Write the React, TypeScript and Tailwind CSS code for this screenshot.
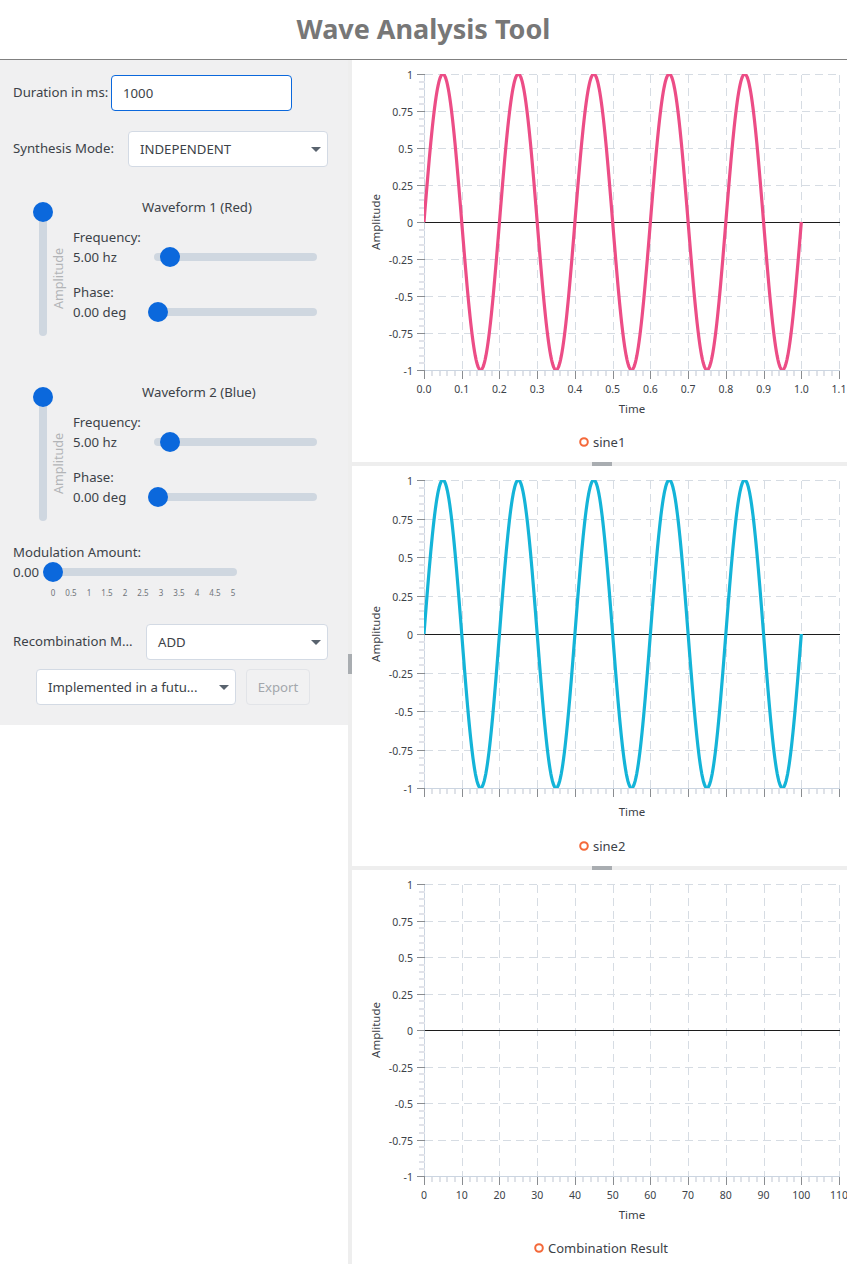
import React from "react";

const FONT = "font-['Noto_Sans','Open_Sans',sans-serif]";

const PLOT_LEFT = 72;
const X_STEP = 37.73;

type ChartProps = {
  height: number;
  top: number;
  bottom: number;
  xLabels: string[];
  color?: string;
  legend: string;
  legendX: number;
  legendY: number;
  timeY: number;
  tickY?: number;
};

const Chart: React.FC<ChartProps> = ({
  height,
  top,
  bottom,
  xLabels,
  color,
  legend,
  legendX,
  legendY,
  timeY,
  tickY,
}) => {
  const clipId = `clip-${legend.replace(" ", "")}`;
  const plotRight = PLOT_LEFT + X_STEP * 11;
  const yFor = (v: number) => top + ((1 - v) / 2) * (bottom - top);
  const yMajors = [1, 0.75, 0.5, 0.25, 0, -0.25, -0.5, -0.75, -1];
  const xMajors = Array.from({ length: 12 }, (_, i) => PLOT_LEFT + i * X_STEP);

  const points: string[] = [];
  if (color) {
    for (let t = 0; t <= 1.0001; t += 0.002) {
      const x = PLOT_LEFT + t * X_STEP * 10;
      points.push(`${x.toFixed(2)},${yFor(Math.sin(2 * Math.PI * 5 * t)).toFixed(2)}`);
    }
  }

  return (
    <svg width={495} height={height} className="block shrink-0 text-[#3c4248]">
      <defs>
        <clipPath id={clipId}>
          <rect x={PLOT_LEFT} y={top} width={plotRight - PLOT_LEFT} height={bottom - top} />
        </clipPath>
      </defs>

      <g transform="translate(0.5 0.5)" shapeRendering="crispEdges">
        {/* grid */}
        {yMajors.slice(0, -1).map((v) =>
          v === 0 ? null : (
            <line key={v} x1={PLOT_LEFT} x2={plotRight} y1={yFor(v)} y2={yFor(v)} stroke="#d6dce3" strokeDasharray="8 5" />
          ),
        )}
        {xMajors.slice(1).map((x) => (
          <line key={x} x1={x} x2={x} y1={top} y2={bottom} stroke="#d6dce3" strokeDasharray="8 5" />
        ))}

        {/* y axis */}
        <line x1={PLOT_LEFT} x2={PLOT_LEFT} y1={top} y2={bottom} stroke="#cbd5e1" />
        {yMajors.slice(0, -1).map((v) =>
          [1, 2, 3, 4].map((i) => {
            const y = yFor(v) + (i * (bottom - top)) / 40;
            return <line key={`${v}-${i}`} x1={PLOT_LEFT - 6} x2={PLOT_LEFT} y1={y} y2={y} stroke="#e1e3ea" strokeWidth={2} />;
          }),
        )}
        {yMajors.map((v) => (
          <line key={v} x1={PLOT_LEFT - 8} x2={PLOT_LEFT} y1={yFor(v)} y2={yFor(v)} stroke="#8a8d91" />
        ))}

        {/* x axis */}
        <line x1={PLOT_LEFT} x2={plotRight} y1={bottom} y2={bottom} stroke="#cbd5e1" />
        {xMajors.slice(0, -1).map((x) =>
          [1, 2, 3, 4].map((i) => {
            const mx = x + (i * X_STEP) / 5;
            return <line key={`${x}-${i}`} x1={mx} x2={mx} y1={bottom} y2={bottom + 5} stroke="#dfe2e8" strokeWidth={2} />;
          }),
        )}
        {xMajors.map((x) => (
          <line key={x} x1={x} x2={x} y1={bottom} y2={bottom + 8} stroke="#8a8d91" />
        ))}

        {/* zero line */}
        <line x1={PLOT_LEFT} x2={plotRight} y1={yFor(0)} y2={yFor(0)} stroke="#1c1c1c" />
      </g>

      {color && (
        <polyline
          points={points.join(" ")}
          fill="none"
          stroke={color}
          strokeWidth={3.2}
          strokeLinejoin="round"
          clipPath={`url(#${clipId})`}
        />
      )}

      {/* labels */}
      {yMajors.map((v) => (
        <text key={v} x={PLOT_LEFT - 11} y={yFor(v) + 5} textAnchor="end" fontSize={10.5} fill="currentColor">
          {v}
        </text>
      ))}
      {tickY !== undefined &&
        xMajors.map((x, i) => (
          <text key={x} x={x} y={tickY + 4} textAnchor="middle" fontSize={10.5} fill="currentColor">
            {xLabels[i]}
          </text>
        ))}
      <text
        x={25}
        y={(top + bottom) / 2}
        textAnchor="middle"
        fontSize={11.5}
        fill="currentColor"
        dominantBaseline="middle"
        transform={`rotate(-90 25 ${(top + bottom) / 2})`}
      >
        Amplitude
      </text>
      <text x={280} y={timeY + 5} textAnchor="middle" fontSize={11.5} fill="currentColor">
        Time
      </text>
      <circle cx={legendX} cy={legendY} r={3.8} fill="#fff" stroke="#f4693a" strokeWidth={2} />
      <text x={legendX + 9} y={legendY + 4.5} fontSize={13} fill="currentColor">
        {legend}
      </text>
    </svg>
  );
};

const Slider: React.FC<{ width: number; thumb: number }> = ({ width, thumb }) => (
  <div className="relative h-2 rounded-full bg-[#cfd7e0]" style={{ width }}>
    <div
      className="absolute top-1/2 h-5 w-5 -translate-x-1/2 -translate-y-1/2 rounded-full bg-[#0b68dc]"
      style={{ left: thumb }}
    />
  </div>
);

const Caret = () => (
  <svg width="10" height="5" viewBox="0 0 10 5" className="shrink-0">
    <path d="M0 0h10L5 5z" fill="#59636e" />
  </svg>
);

const Select: React.FC<{ label: string; className: string }> = ({ label, className }) => (
  <div
    className={`flex h-9 items-center justify-between rounded border border-[#d3dae4] bg-white pl-[11px] pr-[6px] pt-px text-[13.2px] ${className}`}
  >
    <span>{label}</span>
    <Caret />
  </div>
);

const Waveform: React.FC<{ title: string }> = ({ title }) => (
  <div className="ml-[26px] flex h-[145px] items-stretch">
    <div className="relative ml-[13px] mt-[15px] h-[124px] w-2 rounded-full bg-[#cfd7e0]">
      <div className="absolute left-1/2 top-[-10px] h-5 w-5 -translate-x-1/2 rounded-full bg-[#0b68dc]" />
    </div>
    <div className="flex w-[18px] items-center justify-center">
      <span className="relative left-[4px] top-[9px] -rotate-90 whitespace-nowrap text-[12.6px] text-[#b2b4b7]">
        Amplitude
      </span>
    </div>
    <div className="w-[252px] pl-2">
      <div className="-ml-[8px] h-5 pl-[77px] text-[13.2px] leading-5">{title}</div>
      <div className="mt-[10px] flex h-[40px] items-center">
        <div className="w-[81px] text-[13.2px] leading-5">
          <div>Frequency:</div>
          <div>5.00 hz</div>
        </div>
        <div className="relative top-[10px]">
          <Slider width={163} thumb={16} />
        </div>
      </div>
      <div className="mt-[15px] flex h-[40px] items-center">
        <div className="w-[75px] text-[13.2px] leading-5">
          <div>Phase:</div>
          <div>0.00 deg</div>
        </div>
        <div className="relative top-[10px]">
          <Slider width={169} thumb={10} />
        </div>
      </div>
    </div>
  </div>
);

export default function App() {
  const ticks = ["0", "0.5", "1", "1.5", "2", "2.5", "3", "3.5", "4", "4.5", "5"];
  const timeLabels = ["0.0", "0.1", "0.2", "0.3", "0.4", "0.5", "0.6", "0.7", "0.8", "0.9", "1.0", "1.1"];
  const resultLabels = ["0", "10", "20", "30", "40", "50", "60", "70", "80", "90", "100", "110"];

  return (
    <div className={`flex h-[1264px] w-[847px] flex-col overflow-hidden bg-white text-[#3c4248] ${FONT}`}>
      <header className="flex h-[60px] shrink-0 items-center justify-center border-b border-[#808080] text-[27px] font-bold text-[#777777]">
        Wave Analysis Tool
      </header>

      <div className="flex min-h-0 flex-1">
        <aside className="h-[665px] w-[348px] shrink-0 bg-[#f0f0f1]">
          <div className="mt-[15px] flex items-center pl-[13px] text-[13.2px]">
            <span className="w-[98px]">Duration in ms:</span>
            <input
              readOnly
              value="1000"
              className="h-9 w-[181px] rounded border border-[#0b68dc] bg-white px-[11px] text-[13.2px] outline-none"
            />
          </div>
          <div className="mt-5 flex items-center pl-[13px] text-[13.2px]">
            <span className="w-[115px]">Synthesis Mode:</span>
            <Select label="INDEPENDENT" className="w-[200px]" />
          </div>

          <div className="mt-[30px]">
            <Waveform title="Waveform 1 (Red)" />
          </div>
          <div className="mt-[40px]">
            <Waveform title="Waveform 2 (Blue)" />
          </div>

          <div className="mt-[15px] pl-[13px] text-[13.2px] leading-5">
            <div>Modulation Amount:</div>
            <div className="flex items-center">
              <span className="w-[34px]">0.00</span>
              <Slider width={190} thumb={6} />
            </div>
            <div className="ml-[31px] mt-[5px] flex w-[198px] justify-between text-[8px] leading-[11px] text-[#6f747a]">
              {ticks.map((t) => (
                <span key={t} className="w-[18px] text-center">
                  {t}
                </span>
              ))}
            </div>
          </div>

          <div className="mt-[26px] flex items-center pl-[13px] text-[13.2px]">
            <span className="w-[133px] truncate">Recombination M...</span>
            <Select label="ADD" className="w-[182px]" />
          </div>
          <div className="mt-[9px] flex items-center pl-9 text-[13.2px]">
            <Select label="Implemented in a futu..." className="w-[200px]" />
            <button className="ml-[10px] h-9 w-16 rounded border border-[#e2e4e8] bg-[#f1f1f2] pt-px text-[#a3a7ac]">
              Export
            </button>
          </div>
        </aside>

        <div className="relative w-1 shrink-0 bg-[#eeeeee]">
          <div className="absolute left-0 top-[594px] h-5 w-1 bg-[#a9adb1]" />
        </div>

        <main className="flex min-w-0 flex-1 flex-col">
          <Chart
            height={402}
            top={14}
            bottom={310}
            xLabels={timeLabels}
            color="#ec4d86"
            legend="sine1"
            legendX={232}
            legendY={382}
            timeY={348}
            tickY={329}
          />
          <div className="relative h-1 shrink-0 bg-[#eeeeee]">
            <div className="absolute left-[240px] top-0 h-1 w-5 bg-[#a9adb1]" />
          </div>
          <Chart
            height={400}
            top={14}
            bottom={322}
            xLabels={timeLabels}
            color="#14b4d8"
            legend="sine2"
            legendX={232}
            legendY={380}
            timeY={345}
          />
          <div className="relative h-1 shrink-0 bg-[#eeeeee]">
            <div className="absolute left-[240px] top-0 h-1 w-5 bg-[#a9adb1]" />
          </div>
          <Chart
            height={394}
            top={14}
            bottom={306}
            xLabels={resultLabels}
            legend="Combination Result"
            legendX={187}
            legendY={378}
            timeY={344}
            tickY={325}
          />
        </main>
      </div>
    </div>
  );
}
